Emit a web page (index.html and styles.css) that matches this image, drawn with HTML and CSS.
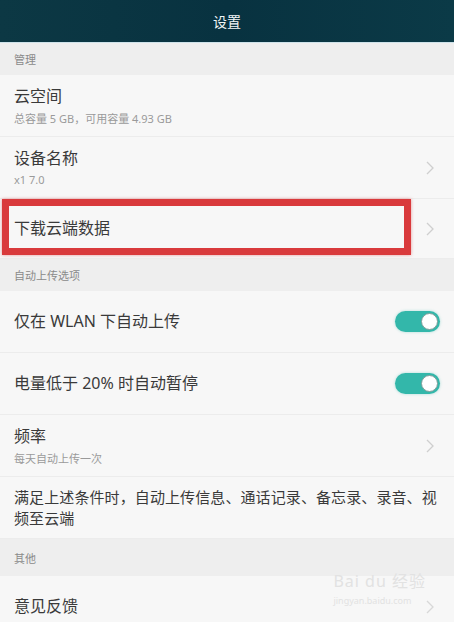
FILE: index.html
```
<!DOCTYPE html>
<html lang="zh-CN">

<head>
    <meta charset="UTF-8">
    <meta name="viewport" content="width=device-width, initial-scale=1.0">
    <title>设置</title>
    <link rel="stylesheet" href="styles.css">
</head>

<body>
    <div class="top-bar">
        <p>设置</p>
    </div>

    <div class="section">管理</div>

    <div class="row">
        <div class="text">
            <div class="title">云空间</div>
            <div class="sub">总容量 5 GB，可用容量 4.93 GB</div>
        </div>
    </div>

    <div class="row">
        <div class="text">
            <div class="title">设备名称</div>
            <div class="sub">x1 7.0</div>
        </div>
        <svg class="chevron" width="8" height="14" viewBox="0 0 8 14"><polyline points="1,1 7,7 1,13" fill="none" stroke="#cfcfcf" stroke-width="1.3"/></svg>
    </div>

    <div class="row mark-row">
        <div class="text">
            <div class="title">下载云端数据</div>
        </div>
        <svg class="chevron" width="8" height="14" viewBox="0 0 8 14"><polyline points="1,1 7,7 1,13" fill="none" stroke="#cfcfcf" stroke-width="1.3"/></svg>
        <div class="red-box"></div>
    </div>

    <div class="section">自动上传选项</div>

    <div class="row">
        <div class="text">
            <div class="title">仅在 WLAN 下自动上传</div>
        </div>
        <div class="switch"><span></span></div>
    </div>

    <div class="row">
        <div class="text">
            <div class="title">电量低于 20% 时自动暂停</div>
        </div>
        <div class="switch"><span></span></div>
    </div>

    <div class="row">
        <div class="text">
            <div class="title">频率</div>
            <div class="sub">每天自动上传一次</div>
        </div>
        <svg class="chevron" width="8" height="14" viewBox="0 0 8 14"><polyline points="1,1 7,7 1,13" fill="none" stroke="#cfcfcf" stroke-width="1.3"/></svg>
    </div>

    <div class="row note">
        <div class="title">满足上述条件时，自动上传信息、通话记录、备忘录、录音、视频至云端</div>
    </div>

    <div class="section other">其他</div>

    <div class="row last">
        <div class="text">
            <div class="title">意见反馈</div>
        </div>
        <svg class="chevron" width="8" height="14" viewBox="0 0 8 14"><polyline points="1,1 7,7 1,13" fill="none" stroke="#d8d8d8" stroke-width="1.3"/></svg>
        <div class="watermark">
            <span class="wm-big">Bai du 经验</span>
            <span class="wm-small">jingyan.baidu.com</span>
        </div>
    </div>
</body>

</html>
```

FILE: styles.css
```
body {
    margin: 0;
    background-color: #f6f6f6;
    font-family: "Noto Sans", "Noto Sans CJK SC", sans-serif;
    color: #333333;
    overflow: hidden;
}

.top-bar {
    height: 42px;
    background: linear-gradient(to right, #0c3844, #083240 50%, #0b3a47);
    border-bottom: 1px solid #cfe3ea;
    display: flex;
    justify-content: center;
    align-items: center;
}

.top-bar p {
    margin: 0;
    color: #f2f6f7;
    font-size: 14px;
}

.section {
    height: 32px;
    background-color: #eeeeee;
    color: #8a8a8a;
    font-size: 11px;
    padding-left: 14px;
    display: flex;
    align-items: center;
}

.section.other {
    height: 37px;
}

.row {
    height: 61px;
    background-color: #f7f7f7;
    border-bottom: 1px solid #ececec;
    padding: 0 14px;
    display: flex;
    align-items: center;
    justify-content: space-between;
    position: relative;
}

.row.mark-row {
    height: 59px;
}

.row.last {
    border-bottom: none;
}

.title {
    font-size: 16px;
    color: #3a3a3a;
    line-height: 21px;
}

.sub {
    font-size: 11px;
    color: #9a9a9a;
    margin-top: 3px;
}

.row.note {
    padding-right: 8px;
}

.note .title {
    font-size: 15px;
    line-height: 21px;
    letter-spacing: 0.1px;
}

.chevron {
    margin-right: 6px;
}

.switch {
    width: 45px;
    height: 21px;
    border-radius: 11px;
    background-color: #33b7aa;
    box-shadow: 0 0 3px rgba(51, 183, 170, 0.4);
    position: relative;
}

.switch span {
    position: absolute;
    right: 2px;
    top: 2px;
    width: 15px;
    height: 15px;
    border-radius: 50%;
    background-color: #ffffff;
    border: 1px solid #7f9e9a;
}

.red-box {
    position: absolute;
    left: 2px;
    top: 0;
    width: 395px;
    height: 42px;
    border: 7px solid #d93a3c;
    box-shadow: 0 0 3px rgba(217, 58, 60, 0.5);
}

.watermark {
    position: absolute;
    right: 28px;
    top: -8px;
    display: flex;
    flex-direction: column;
    align-items: flex-start;
    color: #e2e2e2;
}

.wm-big {
    font-size: 16px;
    letter-spacing: 1px;
}

.wm-small {
    font-size: 9px;
    margin-top: 2px;
}
```
